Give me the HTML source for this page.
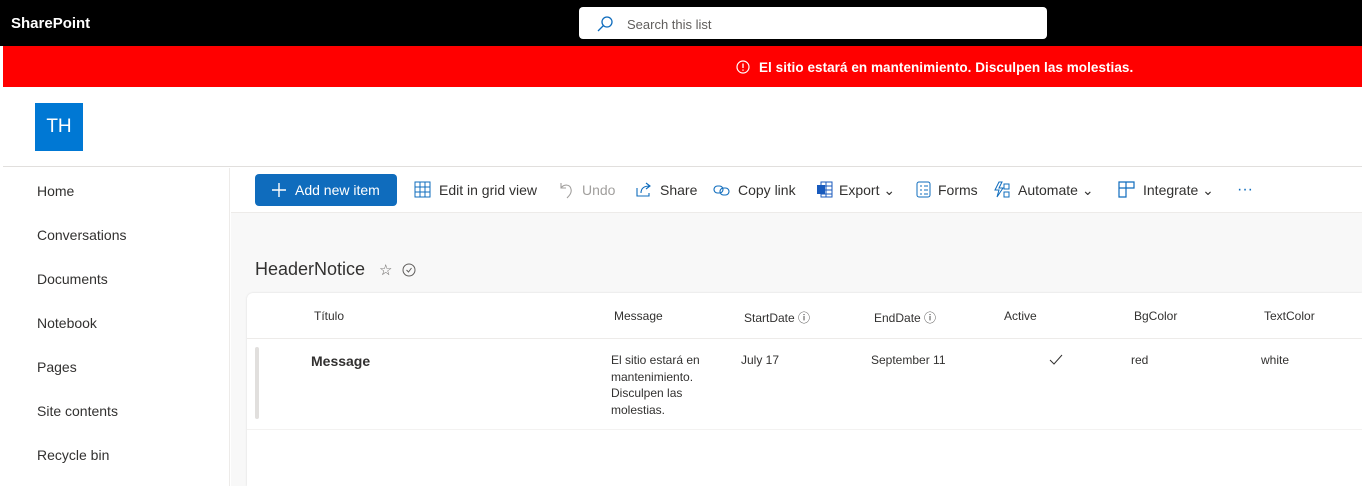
<!DOCTYPE html><html><head><meta charset="utf-8"><style>
*{box-sizing:border-box;margin:0;padding:0}
body{width:1362px;height:486px;overflow:hidden;font-family:"Liberation Sans",sans-serif;background:#fff;position:relative;color:#323130}
.a{position:absolute}
.top{left:0;top:0;width:1362px;height:46px;background:#000}
.red{left:3px;top:46px;width:1359px;height:41px;background:#f00;color:#fff;font-weight:bold;font-size:13.5px}
.nav div{position:absolute;left:37px;font-size:14px;color:#323130}
.cmd{font-size:14px;color:#323130;top:182px}
.th{font-size:12px;top:309px;color:#323130}
.td{font-size:12px;color:#323130}
svg.i{position:absolute;top:181px}
</style></head><body>
<div class="a top"></div>
<div class="a" style="left:11px;top:15px;color:#fff;font-weight:bold;font-size:15px">SharePoint</div>
<div class="a" style="left:579px;top:7px;width:468px;height:32px;background:#fff;border-radius:4px"></div>
<svg class="a" style="left:596px;top:15px" width="18" height="18" viewBox="0 0 18 18"><circle cx="11" cy="7" r="5" fill="none" stroke="#0f6cbd" stroke-width="1.3"/><path d="M7.5 10.5L2 16" stroke="#0f6cbd" stroke-width="1.3"/></svg>
<div class="a" style="left:627px;top:17px;font-size:13px;color:#605e5c">Search this list</div>
<div class="a red"><svg class="a" style="left:733px;top:14px" width="14" height="14"><circle cx="7" cy="7" r="6" fill="none" stroke="#fff" stroke-width="1.2"/><path d="M7 3.5v4.5M7 9.5v1.2" stroke="#fff" stroke-width="1.3"/></svg><span class="a" style="left:756px;top:14px;white-space:nowrap;letter-spacing:0.05px">El sitio estará en mantenimiento. Disculpen las molestias.</span></div>
<div class="a" style="left:3px;top:87px;width:1359px;height:80px;border-bottom:1px solid #e1dfdd;background:#fff"></div>
<div class="a" style="left:35px;top:103px;width:48px;height:48px;background:#0078d4;color:#fff;font-size:19px;text-align:center;line-height:48px">TH</div>
<div class="a" style="left:3px;top:168px;width:227px;height:318px;background:#fff;border-right:1px solid #edebe9"></div>
<div class="nav"><div style="top:183px">Home</div><div style="top:227px">Conversations</div><div style="top:271px">Documents</div><div style="top:315px">Notebook</div><div style="top:359px">Pages</div><div style="top:403px">Site contents</div><div style="top:447px">Recycle bin</div></div>
<div class="a" style="left:231px;top:168px;width:1131px;height:45px;background:#fff;border-bottom:1px solid #edebe9"></div>
<div class="a" style="left:231px;top:213px;width:1131px;height:273px;background:#f8f8f8"></div>
<div class="a" style="left:255px;top:174px;width:142px;height:32px;background:#0f6cbd;border-radius:4px;color:#fff;font-size:14px;line-height:32px;padding-left:40px">Add new item</div>
<svg class="a" style="left:271px;top:182px" width="16" height="16"><path d="M8 1v14M1 8h14" stroke="#fff" stroke-width="1.4"/></svg>
<div class="a cmd" style="left:439px">Edit in grid view</div>
<svg class="i" style="left:414px" width="17" height="17"><rect x="1" y="1" width="15" height="15" fill="none" stroke="#0f6cbd"/><path d="M1 6h15M1 11h15M6 1v15M11 1v15" stroke="#0f6cbd"/></svg>
<div class="a cmd" style="left:582px;color:#a19f9d">Undo</div>
<svg class="i" style="left:558px" width="16" height="18"><path d="M3 2v5h5M3 7c3-4 9-4 10 1c1 4-2 7-4 9" fill="none" stroke="#a19f9d" stroke-width="1.1"/></svg>
<div class="a cmd" style="left:660px">Share</div>
<svg class="i" style="left:635px" width="17" height="17"><path d="M2 7v8h12v-3M6 12c0-5 3-7 9-7M11 2l4 3-4 3" fill="none" stroke="#0f6cbd" stroke-width="1.1"/></svg>
<div class="a cmd" style="left:738px">Copy link</div>
<svg class="i" style="left:713px" width="18" height="17"><rect x="1" y="5" width="9" height="7" rx="3.5" fill="none" stroke="#0f6cbd" stroke-width="1.1"/><rect x="7" y="7" width="9" height="7" rx="3.5" fill="none" stroke="#0f6cbd" stroke-width="1.1"/></svg>
<div class="a cmd" style="left:839px">Export ⌄</div>
<svg class="i" style="left:816px" width="17" height="17"><rect x="5" y="1" width="11" height="15" fill="none" stroke="#185abd"/><path d="M5 5h11M5 9h11M5 13h11M10 1v15" stroke="#185abd"/><rect x="1" y="4" width="8" height="9" fill="#185abd"/></svg>
<div class="a cmd" style="left:938px">Forms</div>
<svg class="i" style="left:916px" width="16" height="17"><rect x="1" y="1" width="13" height="15" rx="2" fill="none" stroke="#0f6cbd"/><path d="M4 5h2M8 5h4M4 9h2M8 9h4M4 13h2M8 13h4" stroke="#0f6cbd"/></svg>
<div class="a cmd" style="left:1018px">Automate ⌄</div>
<svg class="i" style="left:993px" width="18" height="18"><path d="M6 1L2 9h4l-2 7 6-9H6l3-6z" fill="none" stroke="#0f6cbd"/><rect x="11" y="3" width="5" height="5" fill="none" stroke="#0f6cbd"/><rect x="11" y="11" width="5" height="5" fill="none" stroke="#0f6cbd"/></svg>
<div class="a cmd" style="left:1143px">Integrate ⌄</div>
<svg class="i" style="left:1118px" width="17" height="17"><path d="M1 1h15v6H8v9H1z M8 1v6M1 7h7" fill="none" stroke="#0f6cbd" stroke-width="1.2"/></svg>
<div class="a" style="left:1237px;top:181px;color:#0f6cbd;font-size:16px">···</div>
<div class="a" style="left:255px;top:259px;font-size:18px;color:#323130">HeaderNotice</div>
<div class="a" style="left:379px;top:261px;font-size:15px;color:#605e5c">☆</div>
<svg class="a" style="left:402px;top:263px" width="14" height="14"><circle cx="7" cy="7" r="6" fill="none" stroke="#605e5c"/><path d="M4.5 7l2 2 3-4" fill="none" stroke="#605e5c"/></svg>
<div class="a" style="left:247px;top:293px;width:1115px;height:193px;background:#fff;border-radius:6px 0 0 0;box-shadow:0 0 2px rgba(0,0,0,.12)"></div>
<div class="a" style="left:247px;top:338px;width:1115px;border-top:1px solid #edebe9"></div>
<div class="a" style="left:247px;top:429px;width:1115px;border-top:1px solid #f3f2f1"></div>
<div class="a th" style="left:314px">Título</div>
<div class="a th" style="left:614px">Message</div>
<div class="a th" style="left:744px">StartDate ⓘ</div>
<div class="a th" style="left:874px">EndDate ⓘ</div>
<div class="a th" style="left:1004px">Active</div>
<div class="a th" style="left:1134px">BgColor</div>
<div class="a th" style="left:1264px">TextColor</div>
<div class="a" style="left:255px;top:347px;width:4px;height:72px;background:#e1dfdd;border-radius:2px"></div>
<div class="a" style="left:311px;top:353px;font-size:14px;font-weight:bold;color:#323130">Message</div>
<div class="a td" style="left:611px;top:352px;width:100px;line-height:16.5px">El sitio estará en mantenimiento. Disculpen las molestias.</div>
<div class="a td" style="left:741px;top:353px">July 17</div>
<div class="a td" style="left:871px;top:353px">September 11</div>
<svg class="a" style="left:1049px;top:354px" width="14" height="12"><path d="M1 6l4 4 8-9" fill="none" stroke="#323130"/></svg>
<div class="a td" style="left:1131px;top:353px">red</div>
<div class="a td" style="left:1261px;top:353px">white</div>
</body></html>
